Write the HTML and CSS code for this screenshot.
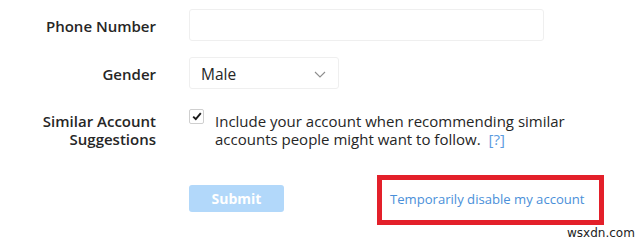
FILE: index.html
```html
<!DOCTYPE html>
<html lang="en">
<head>
<meta charset="utf-8">
<title>Edit Profile</title>
<link rel="stylesheet" href="styles.css">
</head>
<body>
<form class="form">
  <div class="row row-phone">
    <label class="label label-single" for="phone">Phone Number</label>
    <div class="field"><input id="phone" class="input" type="text"></div>
  </div>
  <div class="row row-gender">
    <label class="label label-single" for="gender">Gender</label>
    <div class="field">
      <div class="select">
        <span class="select-value">Male</span>
        <svg class="chev" width="12" height="7" viewBox="0 0 12 7"><path d="M1 1l5 5 5-5" fill="none" stroke="#8e8e8e" stroke-width="1.1"/></svg>
      </div>
    </div>
  </div>
  <div class="row row-similar">
    <div class="label"><span class="label-line">Similar Account</span><span class="label-line">Suggestions</span></div>
    <div class="field check-field">
      <span class="checkbox">
        <svg width="10" height="9" viewBox="0 0 10 9"><path d="M1.2 4.6l2.6 2.6 5-6" fill="none" stroke="#1a1a1a" stroke-width="1.9"/></svg>
      </span>
      <p class="check-text">Include your account when recommending similar accounts people might want to follow.<a class="help" href="#">[?]</a></p>
    </div>
  </div>
  <div class="row row-actions">
    <div class="label"></div>
    <div class="field actions">
      <button class="submit" type="button">Submit</button>
      <a class="disable" href="#">Temporarily disable my account</a>
    </div>
  </div>
</form>
<div class="watermark">wsxdn.com</div>
</body>
</html>
```

FILE: styles.css
```css
html, body {
  margin: 0;
  padding: 0;
  background: #ffffff;
}
body {
  width: 643px;
  height: 241px;
  overflow: hidden;
  position: relative;
  font-family: "Open Sans", "Noto Sans", sans-serif;
  color: #262626;
}
.form {
  padding-top: 9px;
}
.row {
  display: grid;
  grid-template-columns: 156px 1fr;
  column-gap: 33px;
  align-items: center;
}
.label {
  text-align: right;
  font-weight: 600;
  font-size: 15px;
  line-height: 18px;
}
.label-line {
  display: block;
}
.label-single {
  padding-top: 2px;
}
.row-gender {
  margin-top: 16px;
}
.input {
  box-sizing: border-box;
  width: 355px;
  height: 32px;
  border: 1px solid #efefef;
  border-radius: 3px;
  background: #fff;
  margin: 0;
  padding: 0 10px;
  display: block;
}
.select {
  box-sizing: border-box;
  width: 150px;
  height: 32px;
  border: 1px solid #efefef;
  border-radius: 3px;
  display: flex;
  align-items: center;
  justify-content: space-between;
  padding: 0 12px 0 11px;
  font-size: 15.5px;
}
.select-value {
  padding-top: 2px;
}
.chev {
  display: block;
  margin-top: 3px;
}
.row-similar {
  margin-top: 23px;
  align-items: start;
}
.check-field {
  display: flex;
  align-items: flex-start;
  gap: 11px;
}
.checkbox {
  box-sizing: border-box;
  width: 15px;
  height: 15px;
  border: 1px solid #cfcfcf;
  border-radius: 2px;
  display: flex;
  align-items: center;
  justify-content: center;
  margin-top: -3px;
  flex: none;
}
.check-text {
  margin: 0;
  font-size: 15px;
  line-height: 18px;
  width: 380px;
}
.help {
  color: #5b9be0;
  text-decoration: none;
  margin-left: 8px;
}
.row-actions {
  margin-top: 37px;
}
.actions {
  display: flex;
  align-items: center;
}
.submit {
  width: 95px;
  height: 27px;
  border: 0;
  border-radius: 3px;
  background: #b2d8fa;
  color: #ffffff;
  font-family: "Open Sans", "Noto Sans", sans-serif;
  font-weight: 700;
  font-size: 14px;
  padding: 0;
}
.disable {
  position: relative;
  margin-left: 106px;
  color: #4a8fd9;
  font-size: 13.1px;
  text-decoration: none;
  line-height: 18px;
}
.disable::after {
  content: "";
  position: absolute;
  left: -13px;
  right: -19px;
  top: -15px;
  bottom: -17px;
  border: 5px solid #e3202a;
}
.watermark {
  position: absolute;
  left: 567px;
  top: 226px;
  font-family: "DejaVu Sans", sans-serif;
  font-size: 12px;
  color: #222;
}
```
